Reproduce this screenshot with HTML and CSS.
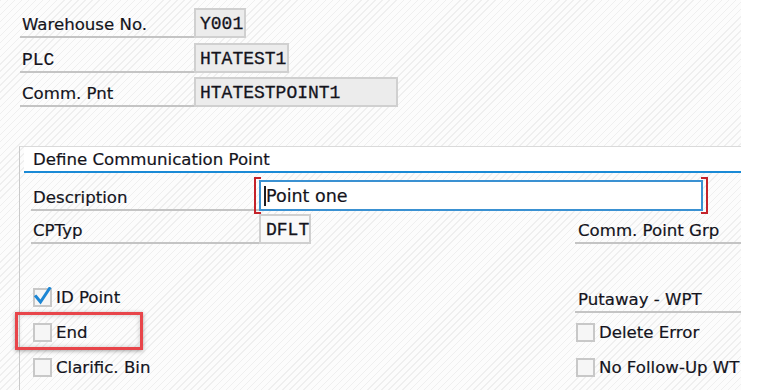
FILE: index.html
```html
<!DOCTYPE html>
<html lang="en">
  <head>
    <meta charset="utf-8">
    <title>Define Communication Point</title>
    <link rel="stylesheet" href="styles.css">
  </head>
  <body>
    <div class="screen">
      <div class="head">
        <div class="row">
          <span class="label">Warehouse No.</span>
          <span class="field ro" style="width: 52px">Y001</span>
        </div>
        <div class="row">
          <span class="label mono">PLC</span>
          <span class="field ro" style="width: 95px">HTATEST1</span>
        </div>
        <div class="row">
          <span class="label">Comm. Pnt</span>
          <span class="field ro" style="width: 204px">HTATESTPOINT1</span>
        </div>
      </div>

      <div class="frame">
        <div class="frame-title"><span>Define Communication Point</span></div>

        <div class="frow first">
          <span class="label wide">Description</span>
          <span class="input-wrap">
            <span class="input"><span class="caret"></span>Point one</span>
          </span>
        </div>
        <div class="frow">
          <span class="label wide">CPTyp</span>
          <span class="field dflt">DFLT</span>
          <span class="label side">Comm. Point Grp</span>
        </div>

        <div class="checks">
          <div class="col-left">
            <div class="crow">
              <span class="box checked">
                <svg width="19" height="19" viewBox="0 0 19 19"><path d="M3 9.5 L7.5 15 L16.5 1.5" fill="none" stroke="#1c86d4" stroke-width="3" stroke-linecap="square"/></svg>
              </span>
              <span class="ctext">ID Point</span>
            </div>
            <div class="crow">
              <span class="box"></span>
              <span class="ctext">End</span>
            </div>
            <div class="crow">
              <span class="box"></span>
              <span class="ctext">Clarific. Bin</span>
            </div>
          </div>
          <div class="col-right">
            <div class="crow">
              <span class="label side full">Putaway - WPT</span>
            </div>
            <div class="crow">
              <span class="box"></span>
              <span class="ctext">Delete Error</span>
            </div>
            <div class="crow">
              <span class="box"></span>
              <span class="ctext">No Follow-Up WT</span>
            </div>
          </div>
        </div>
      </div>

      <div class="mark"></div>
    </div>
  </body>
</html>
```

FILE: styles.css
```css
html, body { margin: 0; background: #fff; }
body {
  font-family: "DejaVu Sans", Verdana, sans-serif;
  font-size: 16.6px;
  color: #14141c;
  -webkit-text-stroke: 0.2px #14141c;
}

.screen {
  position: relative;
  width: 741px;
  height: 390px;
  overflow: hidden;
  background: repeating-linear-gradient(135deg, #efefef 0 1px, #fcfcfc 1px 5px);
}

.mono { font-family: "Liberation Mono", "Courier New", monospace; font-size: 18px; }

/* header fields */
.head { padding: 8px 0 0 20px; display: flex; flex-direction: column; gap: 4.5px; }
.row { display: flex; height: 30px; }
.label {
  box-sizing: border-box;
  display: flex;
  align-items: flex-end;
  width: 174px;
  padding: 0 0 1px 2px;
  line-height: 20px;
  border-bottom: 2px solid #c4c4c4;
  white-space: nowrap;
}
.field {
  box-sizing: border-box;
  height: 30px;
  padding: 2px 0 0 4px;
  border: 2px solid #d0d0d0;
  font-family: "Liberation Mono", "Courier New", monospace;
  font-size: 18px;
  line-height: 24px;
  white-space: nowrap;
  -webkit-text-stroke: 0.3px #14141c;
}
.ro { background: #ececec; }

/* frame */
.frame {
  margin: 39px 0 0 19px;
  height: 300px;
  border-top: 1px solid #dadada;
  border-left: 1px solid #cacaca;
}
.frame-title {
  margin-left: 4px;
  height: 24px;
  padding-left: 9px;
  line-height: 26px;
  background: #fff;
  border-bottom: 2px solid #1a8ad6;
}
.frow { display: flex; height: 30px; margin: 3px 0 0 11px; }
.frow.first { height: 31px; margin-top: 7px; }
.label.wide { width: 228px; }
.label.side { width: 166px; margin-left: auto; padding-left: 3px; }
.label.full { height: 33px; margin-left: 0; }

.input-wrap { position: relative; display: flex; }
.input-wrap::before,
.input-wrap::after {
  content: "";
  position: absolute;
  top: -3px;
  bottom: -3px;
  width: 5px;
  border: 2px solid #c4232b;
}
.input-wrap::before { left: -5px; border-right: none; }
.input-wrap::after { right: -5px; border-left: none; }
.input {
  box-sizing: border-box;
  display: flex;
  align-items: center;
  width: 444px;
  height: 31px;
  padding-left: 3px;
  border: 2px solid #3a91d2;
  background: #fff;
  font-size: 17.5px;
}
.caret { width: 2px; height: 20px; background: #1d1d24; }

.field.dflt { width: 52px; background: #f9f9f9; padding-left: 5px; }

/* checkboxes */
.checks { display: flex; margin: 36px 0 0 11px; }
.col-left { width: 544px; padding-left: 2px; box-sizing: border-box; }
.col-right { width: 166px; }
.crow { display: flex; align-items: center; height: 35px; }
.col-right .crow:first-child { align-items: flex-start; }
.box {
  box-sizing: border-box;
  width: 19px;
  height: 19px;
  border: 2px solid #c8c8c8;
  background: #f6f6f6;
  position: relative;
}
.box svg { position: absolute; left: -2px; top: -3px; }
.ctext { margin-left: 4px; white-space: nowrap; }
.col-right .box { margin-left: 1px; }

/* red annotation frame */
.mark {
  position: absolute;
  left: 15px;
  top: 312px;
  width: 128px;
  height: 38px;
  box-sizing: border-box;
  border: 3px solid #e8454a;
  box-shadow: 0 1px 4px rgba(0, 0, 0, 0.35), inset 0 0 5px rgba(0, 0, 0, 0.2);
}
```
